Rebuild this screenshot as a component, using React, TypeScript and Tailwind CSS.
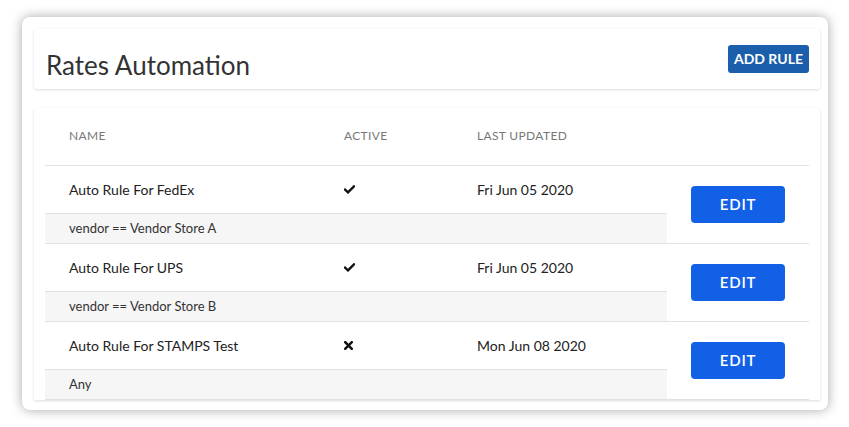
import React from "react";

const rules = [
  { name: "Auto Rule For FedEx", active: true, date: "Fri Jun 05 2020", cond: "vendor == Vendor Store A" },
  { name: "Auto Rule For UPS", active: true, date: "Fri Jun 05 2020", cond: "vendor == Vendor Store B" },
  { name: "Auto Rule For STAMPS Test", active: false, date: "Mon Jun 08 2020", cond: "Any" },
];

const Check = () => (
  <svg width="11" height="9" viewBox="0 0 11 9" className="block">
    <path d="M1 4.6 L4 7.4 L10 1.4" stroke="#111" strokeWidth="2.4" fill="none" strokeLinecap="square" />
  </svg>
);

const Cross = () => (
  <svg width="9" height="9" viewBox="0 0 9 9" className="block">
    <path d="M1.2 1.2 L7.8 7.8 M7.8 1.2 L1.2 7.8" stroke="#111" strokeWidth="2.5" fill="none" strokeLinecap="square" />
  </svg>
);

export default function App() {
  return (
    <div className="w-[849px] h-[427px] bg-white overflow-hidden" style={{ fontFamily: "Lato, 'Open Sans', sans-serif" }}>
      <div className="ml-[22px] mt-[17px] w-[806px] h-[393px] rounded-[8px] bg-white shadow-[0_0_12px_rgba(0,0,0,0.35)] pl-[12px] pr-[8px] pt-[12px] overflow-hidden">
        <div className="h-[60px] bg-white rounded-[3px] shadow-[0_1px_3px_rgba(0,0,0,0.14)] flex items-center justify-between pl-[12px] pr-[11px]">
          <h1 className="text-[26px] text-[#333] leading-none mt-[11px]">Rates Automation</h1>
          <button className="h-[28px] px-[6px] rounded-[3px] bg-[#1b5eab] text-white text-[14px] font-bold leading-none mt-[-1px]">
            ADD RULE
          </button>
        </div>
        <div className="mt-[19px] h-[292px] bg-white rounded-t-[3px] shadow-[0_1px_3px_rgba(0,0,0,0.14)] px-[11px]">
          <div className="grid grid-cols-[275px_133px_214px_142px] h-[58px] items-center border-b border-[#e2e2e2] text-[12px] text-[#777] tracking-[0.35px]">
            <div className="pl-[24px] mt-[-2px]">NAME</div>
            <div className="pl-[24px] mt-[-2px]">ACTIVE</div>
            <div className="pl-[24px] mt-[-2px]">LAST UPDATED</div>
            <div />
          </div>
          {rules.map((r) => (
            <div key={r.name} className="grid grid-cols-[275px_133px_214px_142px] grid-rows-[47px_30px] border-b border-[#e2e2e2] text-[#222]">
              <div className="pl-[24px] flex items-center text-[14px]">{r.name}</div>
              <div className="pl-[24px] flex items-center">{r.active ? <Check /> : <Cross />}</div>
              <div className="pl-[24px] flex items-center text-[14px]">{r.date}</div>
              <div className="row-span-2 flex items-center justify-center">
                <button className="w-[94px] h-[37px] rounded-[4px] bg-[#1160e6] text-white text-[15px] font-semibold tracking-[0.8px] leading-none">
                  EDIT
                </button>
              </div>
              <div className="col-span-3 bg-[#f6f6f6] border-t border-[#e2e2e2] pl-[24px] flex items-center text-[13px] text-[#333]">
                {r.cond}
              </div>
            </div>
          ))}
        </div>
      </div>
    </div>
  );
}
